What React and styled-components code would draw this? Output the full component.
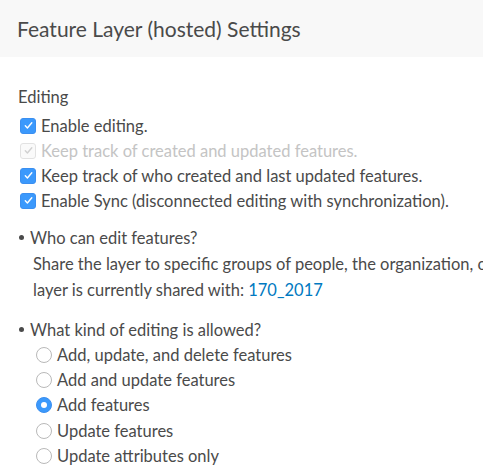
import React from "react";
import styled, { createGlobalStyle } from "styled-components";

const GlobalStyle = createGlobalStyle`
  html, body {
    margin: 0;
    padding: 0;
    background: #fff;
    overflow: hidden;
  }
  body {
    font-family: Lato, "Noto Sans", sans-serif;
    color: #4a4a4a;
  }
`;

const Page = styled.div`
  width: 483px;
  height: 475px;
  overflow: hidden;
`;

const Header = styled.div`
  background: #f8f8f8;
  height: 57px;
  display: flex;
  align-items: center;
  padding-left: 17px;
  font-size: 21px;
  color: #4a4a4a;
  white-space: nowrap;
`;

const Body = styled.div`
  padding: 28px 0 0 18px;
  font-size: 16.5px;
  white-space: nowrap;
`;

const SectionTitle = styled.div`
  line-height: 25px;
  margin-bottom: 3px;
`;

const Row = styled.label`
  display: flex;
  align-items: center;
  height: ${(p) => p.h || 25}px;
  padding-left: ${(p) => p.indent || 2}px;
  color: ${(p) => (p.disabled ? "#c4c4c4" : "#4a4a4a")};
`;

const Box = styled.span`
  width: 16px;
  height: 16px;
  border-radius: 3px;
  margin-right: 5px;
  display: flex;
  align-items: center;
  justify-content: center;
  box-sizing: border-box;
  background: ${(p) => (p.disabled ? "#fafafa" : "#3b99fc")};
  border: 1px solid ${(p) => (p.disabled ? "#e2e2e2" : "#3b8ff0")};
`;

const Radio = styled.span`
  width: 16px;
  height: 16px;
  border-radius: 50%;
  margin-right: 5px;
  box-sizing: border-box;
  display: flex;
  align-items: center;
  justify-content: center;
  background: ${(p) => (p.checked ? "#3b99fc" : "#fff")};
  border: 1px solid ${(p) => (p.checked ? "#3b8ff0" : "#b9b9b9")};
  &::after {
    content: "";
    display: ${(p) => (p.checked ? "block" : "none")};
    width: 6px;
    height: 6px;
    border-radius: 50%;
    background: #fff;
  }
`;

const Bullet = styled.div`
  display: flex;
  align-items: center;
  height: 25px;
  &::before {
    content: "";
    width: 5px;
    height: 5px;
    border-radius: 50%;
    background: #4a4a4a;
    margin: 0 6px 0 1px;
  }
`;

const Note = styled.div`
  padding-left: 15px;
  padding-top: 1px;
  line-height: 26px;
`;

const Link = styled.a`
  color: #0079c1;
  text-decoration: none;
`;

const Block = styled.div`
  margin-top: ${(p) => p.gap || 0}px;
`;

function Check({ disabled }) {
  return (
    <Box disabled={disabled}>
      <svg width="11" height="11" viewBox="0 0 11 11">
        <path
          d="M2.3 5.8 L4.4 8 L8.8 2.8"
          fill="none"
          stroke={disabled ? "#d0d0d0" : "#fff"}
          strokeWidth="1.4"
          strokeLinecap="round"
          strokeLinejoin="round"
        />
      </svg>
    </Box>
  );
}

const checks = [
  { text: "Enable editing." },
  { text: "Keep track of created and updated features.", disabled: true },
  { text: "Keep track of who created and last updated features." },
  { text: "Enable Sync (disconnected editing with synchronization)." },
];

const options = [
  "Add, update, and delete features",
  "Add and update features",
  "Add features",
  "Update features",
  "Update attributes only",
];

export default function App() {
  return (
    <Page>
      <GlobalStyle />
      <Header>Feature Layer (hosted) Settings</Header>
      <Body>
        <SectionTitle>Editing</SectionTitle>
        {checks.map((c) => (
          <Row key={c.text} disabled={c.disabled}>
            <Check disabled={c.disabled} />
            {c.text}
          </Row>
        ))}
        <Block gap={12}>
          <Bullet>Who can edit features?</Bullet>
          <Note>
            Share the layer to specific groups of people, the organization, or everyone. This
            <br />
            layer is currently shared with: <Link>170_2017</Link>
          </Note>
        </Block>
        <Block gap={14}>
          <Bullet>What kind of editing is allowed?</Bullet>
          {options.map((o) => (
            <Row key={o} indent={18} h={25.3}>
              <Radio checked={o === "Add features"} />
              {o}
            </Row>
          ))}
        </Block>
      </Body>
    </Page>
  );
}
